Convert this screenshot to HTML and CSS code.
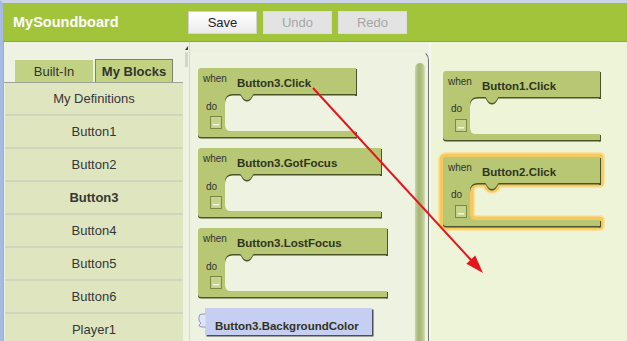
FILE: index.html
```html
<!DOCTYPE html>
<html>
<head>
<meta charset="utf-8">
<title>MySoundboard</title>
<link rel="stylesheet" href="styles.css">
</head>
<body>
<div class="frame">
  <header class="topbar">
    <div class="title">MySoundboard</div>
    <div class="actions">
      <button class="btn">Save</button>
      <button class="btn disabled">Undo</button>
      <button class="btn disabled">Redo</button>
    </div>
  </header>
  <div class="main">
    <aside class="left">
      <div class="tabs">
        <div class="tab">Built-In</div>
        <div class="tab active">My Blocks</div>
      </div>
      <ul class="list">
        <li>My Definitions</li>
        <li>Button1</li>
        <li>Button2</li>
        <li class="sel">Button3</li>
        <li>Button4</li>
        <li>Button5</li>
        <li>Button6</li>
        <li>Player1</li>
      </ul>
    </aside>
    <div class="splitter"><span class="grip"></span><span class="thumb"></span></div>
    <section class="drawer">
      <div class="blocks">
        <svg class="blk" width="162" height="70" viewBox="0 0 162 70">
          <path class="bs" transform="translate(0 1.5)" d="M3 0H158V26H56C54 26 54 32 49 32C44 32 44 26 42 26H35Q27 26 27 34V57Q27 63 33 63H158V69H3Q0 69 0 66V3Q0 0 3 0Z"/>
          <rect class="bs" x="157" y="1" width="2" height="27"/><rect class="bs" x="157" y="64" width="2" height="6.5"/>
          <path class="bf" d="M3 0H158V26H56C54 26 54 32 49 32C44 32 44 26 42 26H35Q27 26 27 34V57Q27 63 33 63H158V69H3Q0 69 0 66V3Q0 0 3 0Z"/>
          <text class="sm" x="5" y="14">when</text>
          <text class="bt" x="39" y="18.5">Button3.Click</text>
          <text class="sm" x="8" y="41.5">do</text>
          <rect class="cb" x="12.5" y="48.5" width="11" height="12"/><rect class="cd" x="15" y="56" width="6" height="1.5"/>
        </svg>
        <svg class="blk" width="187" height="70" viewBox="0 0 187 70">
          <path class="bs" transform="translate(0 1.5)" d="M3 0H183V26H56C54 26 54 32 49 32C44 32 44 26 42 26H35Q27 26 27 34V57Q27 63 33 63H183V69H3Q0 69 0 66V3Q0 0 3 0Z"/>
          <rect class="bs" x="182" y="1" width="2" height="27"/><rect class="bs" x="182" y="64" width="2" height="6.5"/>
          <path class="bf" d="M3 0H183V26H56C54 26 54 32 49 32C44 32 44 26 42 26H35Q27 26 27 34V57Q27 63 33 63H183V69H3Q0 69 0 66V3Q0 0 3 0Z"/>
          <text class="sm" x="5" y="14">when</text>
          <text class="bt" x="39" y="18.5">Button3.GotFocus</text>
          <text class="sm" x="8" y="41.5">do</text>
          <rect class="cb" x="12.5" y="48.5" width="11" height="12"/><rect class="cd" x="15" y="56" width="6" height="1.5"/>
        </svg>
        <svg class="blk" width="193" height="70" viewBox="0 0 193 70">
          <path class="bs" transform="translate(0 1.5)" d="M3 0H189V26H56C54 26 54 32 49 32C44 32 44 26 42 26H35Q27 26 27 34V57Q27 63 33 63H189V69H3Q0 69 0 66V3Q0 0 3 0Z"/>
          <rect class="bs" x="188" y="1" width="2" height="27"/><rect class="bs" x="188" y="64" width="2" height="6.5"/>
          <path class="bf" d="M3 0H189V26H56C54 26 54 32 49 32C44 32 44 26 42 26H35Q27 26 27 34V57Q27 63 33 63H189V69H3Q0 69 0 66V3Q0 0 3 0Z"/>
          <text class="sm" x="5" y="14">when</text>
          <text class="bt" x="39" y="18.5">Button3.LostFocus</text>
          <text class="sm" x="8" y="41.5">do</text>
          <rect class="cb" x="12.5" y="48.5" width="11" height="12"/><rect class="cd" x="15" y="56" width="6" height="1.5"/>
        </svg>
        <svg class="blk" width="178" height="30" viewBox="0 0 178 30">
          <rect class="gs" x="8.5" y="1.5" width="167" height="27"/>
          <rect class="gf" x="7" y="0" width="167" height="27"/>
          <path class="gp" d="M7.5 6H4Q1 6 1 9V12Q1 14 3 15L1 17Q1 19 4 19H7.5"/>
          <text class="bt" x="17" y="22">Button3.BackgroundColor</text>
        </svg>
      </div>
      <div class="scrollbar"></div>
    </section>
    <div class="sep"></div>
    <section class="canvas">
      <svg class="blk" width="161" height="70" viewBox="0 0 161 70">
        <path class="bs" transform="translate(0 1.5)" d="M3 0H157V26H56C54 26 54 32 49 32C44 32 44 26 42 26H35Q27 26 27 34V57Q27 63 33 63H157V69H3Q0 69 0 66V3Q0 0 3 0Z"/>
        <rect class="bs" x="156" y="1" width="2" height="27"/><rect class="bs" x="156" y="64" width="2" height="6.5"/>
        <path class="bf" d="M3 0H157V26H56C54 26 54 32 49 32C44 32 44 26 42 26H35Q27 26 27 34V57Q27 63 33 63H157V69H3Q0 69 0 66V3Q0 0 3 0Z"/>
        <text class="sm" x="5" y="14">when</text>
        <text class="bt" x="39" y="19">Button1.Click</text>
        <text class="sm" x="8" y="41">do</text>
        <rect class="cb" x="12.5" y="48.5" width="11" height="12"/><rect class="cd" x="15" y="56" width="6" height="1.5"/>
      </svg>
      <svg class="blk" width="161" height="70" viewBox="0 0 161 70">
        <path class="glow2" d="M3 0H157V26H56C54 26 54 32 49 32C44 32 44 26 42 26H35Q27 26 27 34V57Q27 63 33 63H157V69H3Q0 69 0 66V3Q0 0 3 0Z"/>
        <path class="glow" d="M3 0H157V26H56C54 26 54 32 49 32C44 32 44 26 42 26H35Q27 26 27 34V57Q27 63 33 63H157V69H3Q0 69 0 66V3Q0 0 3 0Z"/>
        <path class="bs" transform="translate(0 1.5)" d="M3 0H157V26H56C54 26 54 32 49 32C44 32 44 26 42 26H35Q27 26 27 34V57Q27 63 33 63H157V69H3Q0 69 0 66V3Q0 0 3 0Z"/>
        <rect class="bs" x="156" y="1" width="2" height="27"/><rect class="bs" x="156" y="64" width="2" height="6.5"/>
        <path class="bf" d="M3 0H157V26H56C54 26 54 32 49 32C44 32 44 26 42 26H35Q27 26 27 34V57Q27 63 33 63H157V69H3Q0 69 0 66V3Q0 0 3 0Z"/>
        <text class="sm" x="5" y="14">when</text>
        <text class="bt" x="39" y="19">Button2.Click</text>
        <text class="sm" x="8" y="41">do</text>
        <rect class="cb" x="12.5" y="48.5" width="11" height="12"/><rect class="cd" x="15" y="56" width="6" height="1.5"/>
      </svg>
    </section>
  </div>
</div>
<svg class="arrow" width="627" height="341" viewBox="0 0 627 341">
  <line x1="313" y1="88" x2="471" y2="260" stroke="#e3161b" stroke-width="2"/>
  <polygon points="483,273 466.4,263.8 475.2,255.6" fill="#e3161b"/>
</svg>
</body>
</html>
```

FILE: styles.css
```css
* { box-sizing: border-box; margin: 0; padding: 0; }
html, body { width: 627px; height: 341px; overflow: hidden; }
body {
  position: relative;
  font-family: "Liberation Sans", Arial, sans-serif;
  background: #eef2e2;
  color: #333;
}
.frame {
  width: 627px;
  height: 341px;
  border-left: 3px solid #a6bbe2;
  border-top: 3px solid #cdd4e6;
  display: flex;
  flex-direction: column;
}
.topbar {
  flex: none;
  height: 39px;
  background: #a2c43a;
  border-bottom: 1px solid #8c9a80;
  display: flex;
  align-items: center;
}
.title {
  width: 185px;
  padding-left: 10px;
  color: #fff;
  font-weight: bold;
  font-size: 14.5px;
}
.actions { display: flex; gap: 6px; }
.btn {
  width: 69px;
  height: 23px;
  border: 1px solid #d3d3d3;
  background: linear-gradient(#ffffff, #ebebeb);
  font-family: "Liberation Sans", Arial, sans-serif;
  font-size: 13px;
  color: #222;
}
.btn.disabled {
  background: #e3e3e3;
  border-color: #dcdcdc;
  color: #a6a6a6;
}
.main { flex: 1; display: flex; min-height: 0; }
.left {
  flex: none;
  width: 180px;
  border-left: 1px solid #a9b0a0;
  display: flex;
  flex-direction: column;
}
.tabs {
  flex: none;
  height: 41px;
  display: flex;
  align-items: flex-end;
  gap: 2px;
  padding-left: 11px;
  border-bottom: 1px solid #9ea394;
}
.tab {
  width: 78px;
  height: 22px;
  display: flex;
  align-items: center;
  justify-content: center;
  background: #c2d285;
  font-size: 13px;
  color: #333;
}
.tab.active {
  height: 23px;
  border: 1px solid #7c7f72;
  border-bottom: none;
  font-weight: bold;
  background: #c1d281;
}
.list { list-style: none; padding-left: 1px; }
.list li {
  height: 33px;
  border-bottom: 2px solid #d0d5be;
  background: #dfe6bf;
  display: flex;
  align-items: center;
  justify-content: center;
  font-size: 13px;
  color: #363636;
}
.list li.sel { font-weight: bold; }
.splitter {
  flex: none;
  width: 7px;
  border-right: 1px solid #d6dbc8;
  display: flex;
  flex-direction: column;
  align-items: center;
  padding-top: 4px;
}
.grip {
  width: 0; height: 0;
  border-right: 3px solid #3c3c3c;
  border-top: 4px solid transparent;
}
.thumb {
  width: 3px;
  height: 15px;
  margin-top: 2px;
  background: #d2d5ca;
}
.drawer {
  flex: none;
  width: 239px;
  margin-top: 8px;
  background: #eef3e1;
  border-top: 1px solid #eaeedd;
  border-right: 1px solid #6f7269;
  border-top-right-radius: 10px;
  display: flex;
  padding: 12px 3px 0 8px;
}
.blocks {
  flex: 1;
  display: flex;
  flex-direction: column;
  gap: 10px;
  padding-top: 5px;
}
.blk { display: block; overflow: visible; }
.scrollbar {
  flex: none;
  width: 10px;
  border-radius: 5px 5px 0 0;
  background: linear-gradient(to right, #cad6a2, #a6b677 35%, #b3c287 70%, #d2dcb2);
}
.sep { flex: none; width: 2px; background: #f5f7ee; }
.canvas {
  flex: 1;
  background: #edf4d8;
  display: flex;
  flex-direction: column;
  gap: 16px;
  padding: 29px 0 0 12px;
}
.bf { fill: #b7c773; }
.bs { fill: #4b5428; }
.glow { fill: none; stroke: #f6c95e; stroke-width: 7; stroke-linejoin: round; }
.glow2 { fill: none; stroke: #fbe3a4; stroke-width: 10; stroke-linejoin: round; }
.cb { fill: #c6d48b; stroke: #7b8a47; stroke-width: 1; }
.cd { fill: #f3f6e6; }
.gf { fill: #c6cef1; }
.gs { fill: #4a4c60; }
.gp { fill: #dfe3f7; stroke: #8f98c0; stroke-width: 1; }
.bt { font-family: "Liberation Sans", Arial, sans-serif; font-weight: bold; font-size: 11.5px; fill: #30341f; }
.sm { font-family: "Liberation Sans", Arial, sans-serif; font-size: 10px; fill: #333; }
.arrow { position: absolute; left: 0; top: 0; pointer-events: none; }
```
